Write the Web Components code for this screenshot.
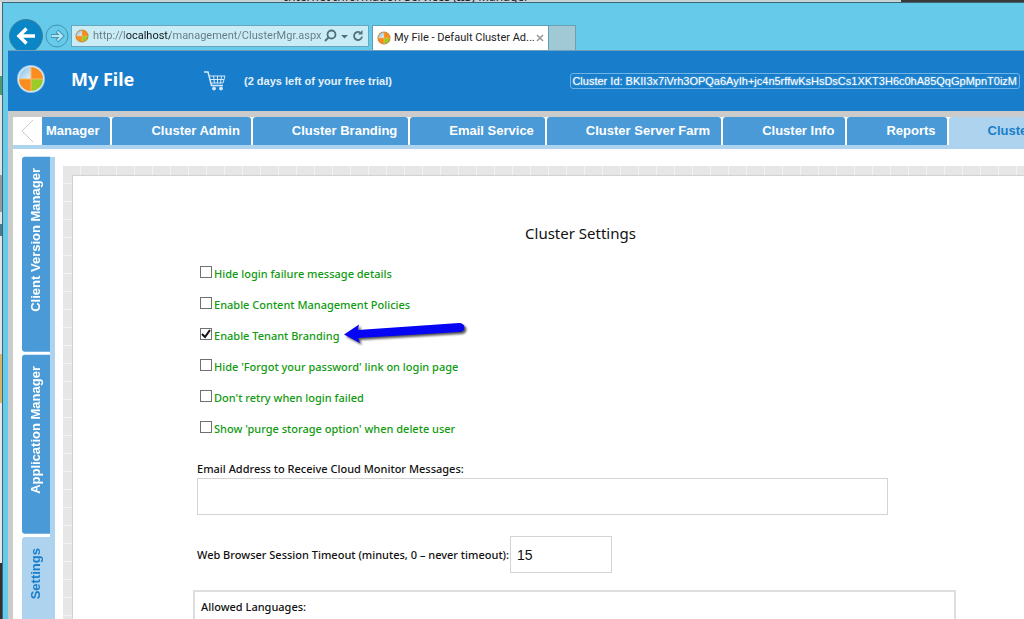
<!DOCTYPE html>
<html lang="en">
<head>
<meta charset="utf-8">
<meta name="viewport" content="width=device-width, initial-scale=1">
<title>My File - Default Cluster Admin</title>
<style>
  body {
    margin: 0;
    height: 100vh;
    overflow: hidden;
    font-family: "Liberation Sans", Arial, sans-serif;
    --ui-font: "Noto Sans", "Open Sans", sans-serif;
    --blue: #187ecb;
    --tab: #4a9ad7;
    --tab-light: #aed3ee;
    --sky: #66cbea;
  }
</style>
</head>
<body>
<desktop-frame>
  <browser-bar slot="bar" title="My File - Default Cluster Ad..." url="http://localhost/management/ClusterMgr.aspx"></browser-bar>
  <app-header heading="My File" cluster="BKII3x7iVrh3OPQa6AyIh+jc4n5rffwKsHsDsCs1XKT3H6c0hA85QqGpMpnT0izM">(2 days left of your free trial)</app-header>
  <top-tabs>
    <top-tab cut>Manager</top-tab>
    <top-tab>Cluster Admin</top-tab>
    <top-tab>Cluster Branding</top-tab>
    <top-tab>Email Service</top-tab>
    <top-tab>Cluster Server Farm</top-tab>
    <top-tab>Cluster Info</top-tab>
    <top-tab>Reports</top-tab>
    <top-tab active>Cluster Settings</top-tab>
  </top-tabs>
  <app-body>
    <side-tab slot="side">Client Version Manager</side-tab>
    <side-tab slot="side">Application Manager</side-tab>
    <side-tab slot="side" active>Settings</side-tab>
    <settings-form heading="Cluster Settings">
      <check-option>Hide login failure message details</check-option>
      <check-option>Enable Content Management Policies</check-option>
      <check-option checked>Enable Tenant Branding<blue-arrow slot="note"></blue-arrow></check-option>
      <check-option>Hide 'Forgot your password' link on login page</check-option>
      <check-option>Don't retry when login failed</check-option>
      <check-option>Show 'purge storage option' when delete user</check-option>
      <text-field slot="fields" label="Email Address to Receive Cloud Monitor Messages:"></text-field>
      <text-field slot="fields" inline label="Web Browser Session Timeout (minutes, 0 – never timeout):" value="15"></text-field>
      <group-box slot="groups">Allowed Languages:</group-box>
    </settings-form>
  </app-body>
</desktop-frame>

<script>
// Shared base: renders styles + markup into an open shadow root
class BaseElement extends HTMLElement {
  constructor() {
    super();
    this.attachShadow({ mode: 'open' });
  }

  attr(name) {
    return this.getAttribute(name) || '';
  }

  connectedCallback() {
    const template = document.createElement('template');
    template.innerHTML = `<style>${this.constructor.styles}</style>${this.render()}`;
    this.shadowRoot.replaceChildren(template.content.cloneNode(true));
  }
}

class DesktopFrame extends BaseElement {
  static get styles() {
    return /* css */`
      :host {
        display: grid;
        grid-template: 2px minmax(0, 1fr) / 2px minmax(0, 1fr);
        height: 100vh;
      }
      .behind {
        grid-column: 1 / 3;
        display: flex;
        align-items: flex-end;
        overflow: hidden;
        background: linear-gradient(90deg, #c6d4d8 88%, #3a3a3a 88%);
      }
      .behind span {
        margin-left: 284px;
        font: 12px/10px var(--ui-font);
        white-space: nowrap;
        color: #223;
      }
      .edge {
        background: linear-gradient(#dfe3e4 0 12%, #4f9a74 12% 15%, #dfe3e4 15% 28%, #9a9a9a 28% 34%, #dfe3e4 34% 36%, #4a7a8c 36% 38%, #e4e4e4 38% 57%, #d9b36a 57% 65%, #e8e8e8 65% 91%, #33302e 91%);
      }
      .window {
        display: flex;
        flex-direction: column;
        min-width: 0;
        border: solid #3c6674;
        border-width: 1px 0 0 1px;
        background: var(--sky);
      }
      .page {
        flex: 1;
        display: flex;
        flex-direction: column;
        min-height: 0;
        margin-left: 5px;
        border-top: 1px solid #6f9fba;
        background: #fff;
        overflow: hidden;
      }
    `;
  }

  render() {
    return /* html */`
      <div class="behind"><span>Internet Information Services (IIS) Manager</span></div>
      <div class="edge"></div>
      <div class="window">
        <slot name="bar"></slot>
        <div class="page"><slot></slot></div>
      </div>
    `;
  }
}

class PinwheelLogo extends BaseElement {
  static get styles() {
    return /* css */`
      :host { display: block; flex: none; width: 14px; height: 14px; }
      :host([large]) { width: 30px; height: 30px; }
      svg { display: block; width: 100%; height: 100%; }
    `;
  }

  render() {
    const ring = this.hasAttribute('large')
      ? '<circle cx="15" cy="15" r="14" fill="#8fc4ea"/><circle cx="15" cy="15" r="13" fill="#e4f1fa"/>'
      : '<circle cx="15" cy="15" r="14" fill="#c98a3c"/>';
    return /* html */`
      <svg viewBox="0 0 30 30" aria-hidden="true">
        <defs>
          <linearGradient id="ice" x1="0" y1="0" x2="1" y2="1"><stop offset="0" stop-color="#7db9e4"/><stop offset="1" stop-color="#e6f3fb"/></linearGradient>
        </defs>
        ${ring}
        <path d="M15 15V3A12 12 0 0 0 3 15z" fill="url(#ice)"/>
        <path d="M15 15V3A12 12 0 0 1 27 15z" fill="#fb8c1e"/>
        <path d="M15 15H3A12 12 0 0 0 15 27z" fill="#fb8c1e"/>
        <path d="M15 15H27A12 12 0 0 1 15 27z" fill="#9ccb28"/>
        <path d="M15 3V27M3 15H27" stroke="#fbb868" stroke-width="1"/>
      </svg>
    `;
  }
}

class BrowserBar extends BaseElement {
  static get styles() {
    return /* css */`
      :host {
        display: flex;
        align-items: flex-end;
        height: 47px;
        padding-left: 6px;
        font: 11px/20px Roboto, sans-serif;
      }
      button { padding: 0; border: 0; background: none; display: block; }
      svg { display: block; }
      .back { height: 31px; overflow: hidden; }
      .forward { margin: 0 2px 2px 2px; }
      .address {
        box-sizing: border-box;
        display: flex;
        align-items: center;
        width: 298px;
        height: 22px;
        margin: 0 3px 3px 0;
        padding: 0 3px 0 3px;
        border: 1px solid #6aa6bb;
        background: #c9ecf7;
      }
      input {
        flex: 1;
        min-width: 0;
        height: 20px;
        margin-left: 4px;
        padding: 0;
        border: 0;
        outline: 0;
        font: inherit;
        /* host name is darker than the rest of the url */
        background: linear-gradient(90deg, #66797f 32px, #10181b 32px 77px, #66797f 77px);
        -webkit-background-clip: text;
        background-clip: text;
        -webkit-text-fill-color: transparent;
        color: #66797f;
      }
      .tab {
        box-sizing: border-box;
        display: flex;
        align-items: center;
        width: 177px;
        height: 25px;
        padding: 0 4px;
        border: solid #5f9fb5;
        border-width: 1px 1px 0;
        background: #fff;
        color: #222;
      }
      .tab span { flex: 1; margin-left: 3px; white-space: nowrap; }
      .new {
        box-sizing: border-box;
        width: 27px;
        height: 25px;
        border: solid #6aa0b2;
        border-width: 1px 1px 0 0;
        background: #a1c8d5;
      }
    `;
  }

  render() {
    return /* html */`
      <button class="back" aria-label="Back">
        <svg width="34" height="34" viewBox="0 0 34 34">
          <circle cx="17" cy="17" r="16.500" fill="#0a86c6" stroke="#3f7f9a"/>
          <path d="M26 17H10M17.500 9.500L10 17l7.500 7.500" fill="none" stroke="#fff" stroke-width="3.500"/>
        </svg>
      </button>
      <button class="forward" aria-label="Forward">
        <svg width="24" height="24" viewBox="0 0 24 24" fill="none">
          <circle cx="12" cy="12" r="11" stroke="#4593ae" stroke-width="1"/>
          <path d="M6 12h11M12 7l5 5-5 5" stroke="#4593ae" stroke-width="4"/>
          <path d="M6.500 12H17M12.500 7.500L17 12l-4.500 4.500" stroke="#b4e6f5" stroke-width="2"/>
        </svg>
      </button>
      <div class="address">
        <pinwheel-logo></pinwheel-logo>
        <input type="text" aria-label="Address" value="${this.attr('url')}">
        <button aria-label="Search">
          <svg width="15" height="16" viewBox="0 0 15 16" fill="none" stroke="#50707c" stroke-width="1.800">
            <circle cx="8.500" cy="6.500" r="4"/><path d="M5.500 9.500L2 13"/>
          </svg>
        </button>
        <button aria-label="Show address list">
          <svg width="13" height="16" viewBox="0 0 13 16"><path d="M3 7h7l-3.500 3.500z" fill="#50707c"/></svg>
        </button>
        <button aria-label="Refresh">
          <svg width="14" height="16" viewBox="0 0 14 16" fill="none" stroke="#50707c" stroke-width="1.800">
            <path d="M11 8.500a4 4 0 1 1-2-4"/><path d="M11.500 2v4.500H7z" fill="#50707c" stroke="none"/>
          </svg>
        </button>
      </div>
      <div class="tab">
        <pinwheel-logo></pinwheel-logo>
        <span>${this.attr('title')}</span>
        <button aria-label="Close tab">
          <svg width="8" height="8" viewBox="0 0 8 8"><path d="M1 1l6 6M7 1L1 7" stroke="#999" stroke-width="1.600"/></svg>
        </button>
      </div>
      <button class="new" aria-label="New tab"></button>
    `;
  }
}

class AppHeader extends BaseElement {
  static get styles() {
    return /* css */`
      :host {
        flex: none;
        display: flex;
        align-items: center;
        height: 60px;
        padding: 0 4px 0 8px;
        background: var(--blue);
        color: #fff;
        white-space: nowrap;
      }
      pinwheel-logo { margin-bottom: 4px; }
      h1 { margin: 0 0 4px 25px; width: 133px; font: bold 18px/24px var(--ui-font); }
      .cart { display: block; }
      .trial { margin-left: 18px; font-size: 11px; font-weight: bold; color: #e4f0fa; }
      .cluster {
        margin-left: auto;
        padding: 0 2px 0 1px;
        border: 1px solid #6fb4e6;
        border-radius: 3px;
        font-size: 11px;
        line-height: 14px;
        text-shadow: 0 0 2px #8cc6f0;
      }
    `;
  }

  render() {
    return /* html */`
      <pinwheel-logo large></pinwheel-logo>
      <h1>${this.attr('heading')}</h1>
      <a href="#cart" aria-label="Buy">
        <svg class="cart" width="22" height="20" viewBox="0 0 22 20" fill="none" stroke="#d6e9f8">
          <path d="M0 1h4l3.500 13.500H19" stroke-width="1.500"/>
          <path d="M5 5h16l-2 7H7M6 8.500h14M9.500 5l1 7M13.500 5v7M17.500 5l-1 7"/>
          <circle cx="10" cy="17.500" r="1.500" fill="#d6e9f8"/><circle cx="17" cy="17.500" r="1.500" fill="#d6e9f8"/>
        </svg>
      </a>
      <span class="trial"><slot></slot></span>
      <span class="cluster">Cluster Id: ${this.attr('cluster')}</span>
    `;
  }
}

class TopTabs extends BaseElement {
  static get styles() {
    return /* css */`
      :host {
        flex: none;
        display: block;
        border: solid #cbcbcb;
        border-width: 6px 0 0 5px;
      }
      nav {
        display: flex;
        gap: 2px;
        height: 28px;
        border-bottom: 4px solid var(--tab-light);
        background: #fff;
      }
      button { flex: none; width: 27px; padding: 0; border: 0; background: #fff; }
      svg { display: block; margin-left: 8px; }
    `;
  }

  render() {
    return /* html */`
      <nav>
        <button aria-label="Scroll tabs left">
          <svg width="13" height="24" viewBox="0 0 13 24"><path d="M12 1L1 12l11 11" fill="none" stroke="#ccc"/></svg>
        </button>
        <slot></slot>
      </nav>
    `;
  }
}

class TopTab extends BaseElement {
  static get styles() {
    return /* css */`
      :host { display: block; flex: none; }
      a {
        display: block;
        padding: 0 11px 0 39px;
        border-radius: 3px 3px 0 0;
        background: var(--tab);
        color: #fff;
        font-size: 13px;
        font-weight: bold;
        line-height: 28px;
        text-decoration: none;
        white-space: nowrap;
      }
      :host([cut]) a { padding-left: 4px; border-top-left-radius: 0; }
      :host([active]) a { height: 32px; background: var(--tab-light); color: var(--blue); }
    `;
  }

  render() {
    return '<a href="#tab"><slot></slot></a>';
  }
}

class AppBody extends BaseElement {
  static get styles() {
    return /* css */`
      :host {
        flex: 1;
        display: flex;
        min-height: 0;
        border-left: 5px solid #cbcbcb;
      }
      nav {
        flex: none;
        display: flex;
        flex-direction: column;
        gap: 3px;
        width: 28px;
        margin: 8px 8px 0 9px;
        border-right: 5px solid var(--tab-light);
      }
      main {
        flex: 1;
        min-width: 0;
        margin-top: 17px;
        padding: 9px 0 0 9px;
        background:
          repeating-linear-gradient(90deg, transparent 0 17px, #f3f3f3 17px 18px),
          repeating-linear-gradient(#e6e6e6 0 17px, #f3f3f3 17px 18px);
      }
      .sheet {
        height: 100%;
        border: solid #d2d2d2;
        border-width: 1px 0 0 1px;
        background: #fff;
      }
    `;
  }

  render() {
    return /* html */`
      <nav><slot name="side"></slot></nav>
      <main><div class="sheet"><slot></slot></div></main>
    `;
  }
}

class SideTab extends BaseElement {
  static get styles() {
    return /* css */`
      :host { display: block; }
      :host([active]) { flex: 1; background: var(--tab-light); border-top-left-radius: 3px; }
      /* rotated so the label reads bottom to top */
      a {
        display: block;
        padding: 40px 0 11px;
        writing-mode: vertical-rl;
        transform: rotate(180deg);
        border-radius: 0 3px 3px 0;
        background: var(--tab);
        color: #fff;
        font-size: 13px;
        font-weight: bold;
        line-height: 28px;
        text-decoration: none;
        white-space: nowrap;
      }
      :host([active]) a { background: none; color: var(--blue); }
    `;
  }

  render() {
    return '<a href="#side"><slot></slot></a>';
  }
}

class SettingsForm extends BaseElement {
  static get styles() {
    return /* css */`
      :host {
        display: block;
        padding: 46px 68px 0 120px;
        font: 11px/16px var(--ui-font);
        color: #111;
      }
      h2 {
        margin: 0;
        padding-left: 12px;
        font-size: 15px;
        font-weight: normal;
        line-height: 22px;
        text-align: center;
      }
      .options { padding: 14px 0 0 7px; }
      .fields {
        display: flex;
        flex-direction: column;
        gap: 21px;
        padding: 17px 0 17px 4px;
      }
    `;
  }

  render() {
    return /* html */`
      <h2>${this.attr('heading')}</h2>
      <div class="options"><slot></slot></div>
      <div class="fields"><slot name="fields"></slot></div>
      <slot name="groups"></slot>
    `;
  }
}

class CheckOption extends BaseElement {
  static get styles() {
    return /* css */`
      :host { display: flex; align-items: center; height: 31px; gap: 4px; color: #109a10; }
      label { display: flex; gap: 2px; font-weight: 500; white-space: nowrap; }
      input {
        appearance: none;
        flex: none;
        box-sizing: border-box;
        width: 12px;
        height: 12px;
        margin: 0;
        border: 1px solid #707070;
        background: #fff center / 10px 10px no-repeat;
      }
      input:checked {
        background-image: url("data:image/svg+xml,%3Csvg xmlns='http://www.w3.org/2000/svg' viewBox='0 0 10 10'%3E%3Cpath d='M1 5l3 3 5-7' fill='none' stroke='%23111' stroke-width='2'/%3E%3C/svg%3E");
      }
    `;
  }

  render() {
    const checked = this.hasAttribute('checked') ? 'checked' : '';
    return /* html */`
      <label><input type="checkbox" ${checked}><span><slot></slot></span></label>
      <slot name="note"></slot>
    `;
  }
}

class BlueArrow extends BaseElement {
  static get styles() {
    return /* css */`
      :host { display: block; padding-bottom: 5px; }
      svg { display: block; overflow: visible; filter: drop-shadow(2px 2px 1px #555); }
    `;
  }

  render() {
    return /* html */`
      <svg width="121" height="20" viewBox="0 0 121 20" aria-hidden="true">
        <path d="M0 11.500L15 1.500L14 7L115 0Q120 0 120.500 4.500Q120 8.500 116 9L14 15L16 20z" fill="#0606f4"/>
      </svg>
    `;
  }
}

class TextField extends BaseElement {
  static get styles() {
    return /* css */`
      :host { display: block; }
      label { display: block; font-weight: 500; white-space: nowrap; }
      input {
        box-sizing: border-box;
        display: block;
        width: 100%;
        max-width: 691px;
        height: 37px;
        margin-top: 1px;
        padding: 0 6px;
        border: 1px solid #d4d4d4;
        background: #fff;
        font: 14px "Liberation Sans", Arial, sans-serif;
        color: #111;
      }
      :host([inline]) label { display: flex; align-items: center; gap: 1px; }
      :host([inline]) input { width: 102px; margin: 0; }
    `;
  }

  render() {
    return /* html */`
      <label>${this.attr('label')}<input type="text" value="${this.attr('value')}"></label>
    `;
  }
}

class GroupBox extends BaseElement {
  static get styles() {
    return /* css */`
      :host {
        display: block;
        height: 120px;
        padding: 7px 6px;
        border: 2px solid #dedede;
        font-weight: 500;
      }
    `;
  }

  render() {
    return '<slot></slot>';
  }
}

customElements.define('pinwheel-logo', PinwheelLogo);
customElements.define('browser-bar', BrowserBar);
customElements.define('app-header', AppHeader);
customElements.define('top-tabs', TopTabs);
customElements.define('top-tab', TopTab);
customElements.define('side-tab', SideTab);
customElements.define('blue-arrow', BlueArrow);
customElements.define('check-option', CheckOption);
customElements.define('text-field', TextField);
customElements.define('group-box', GroupBox);
customElements.define('settings-form', SettingsForm);
customElements.define('app-body', AppBody);
customElements.define('desktop-frame', DesktopFrame);
</script>
</body>
</html>
